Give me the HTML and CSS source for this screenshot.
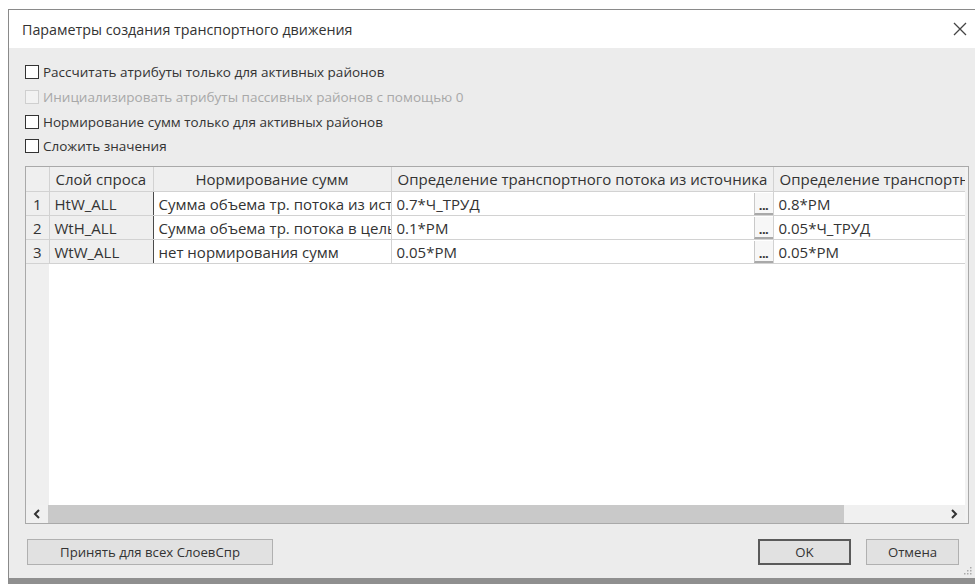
FILE: index.html
```html
<!DOCTYPE html>
<html lang="ru">
<head>
<meta charset="utf-8">
<title>Параметры создания транспортного движения</title>
<link rel="stylesheet" href="styles.css">
</head>
<body>
<div class="window">
  <div class="titlebar">
    <span class="title">Параметры создания транспортного движения</span>
    <svg class="close" width="14" height="14" viewBox="0 0 14 14"><path d="M1 1 L13 13 M13 1 L1 13" stroke="#444" stroke-width="1.3" fill="none"/></svg>
  </div>
  <div class="content">
    <div class="options">
      <label class="opt"><span class="box"></span>Рассчитать атрибуты только для активных районов</label>
      <label class="opt disabled"><span class="box"></span>Инициализировать атрибуты пассивных районов с помощью 0</label>
      <label class="opt"><span class="box"></span>Нормирование сумм только для активных районов</label>
      <label class="opt"><span class="box"></span>Сложить значения</label>
    </div>

    <div class="gridframe">
      <div class="gridview">
        <table class="grid">
          <colgroup>
            <col class="c-num"><col class="c-layer"><col class="c-norm"><col class="c-src"><col class="c-dst">
          </colgroup>
          <thead>
            <tr>
              <th class="corner"></th>
              <th>Слой спроса</th>
              <th class="center">Нормирование сумм</th>
              <th>Определение транспортного потока из источника</th>
              <th>Определение транспортного потока в цель</th>
            </tr>
          </thead>
          <tbody>
            <tr>
              <td class="num">1</td>
              <td class="fixed">HtW_ALL</td>
              <td>Сумма объема тр. потока из источника</td>
              <td><div class="edit"><span class="val">0.7*Ч_ТРУД</span><span class="dots">...</span></div></td>
              <td>0.8*PM</td>
            </tr>
            <tr>
              <td class="num">2</td>
              <td class="fixed">WtH_ALL</td>
              <td>Сумма объема тр. потока в цель</td>
              <td><div class="edit"><span class="val">0.1*PM</span><span class="dots">...</span></div></td>
              <td>0.05*Ч_ТРУД</td>
            </tr>
            <tr>
              <td class="num">3</td>
              <td class="fixed">WtW_ALL</td>
              <td>нет нормирования сумм</td>
              <td><div class="edit"><span class="val">0.05*PM</span><span class="dots">...</span></div></td>
              <td>0.05*PM</td>
            </tr>
          </tbody>
        </table>
        <div class="filler">
          <div class="filler-num"></div>
          <div class="filler-body"></div>
        </div>
      </div>
      <div class="hscroll">
        <span class="arrow">
          <svg width="8" height="10" viewBox="0 0 8 10"><path d="M6 1 L2 5 L6 9" stroke="#333" stroke-width="2" fill="none"/></svg>
        </span>
        <div class="track"><div class="thumb"></div></div>
        <span class="arrow">
          <svg width="8" height="10" viewBox="0 0 8 10"><path d="M2 1 L6 5 L2 9" stroke="#333" stroke-width="2" fill="none"/></svg>
        </span>
      </div>
    </div>

    <div class="buttons">
      <button class="btn wide">Принять для всех СлоевСпр</button>
      <div class="spacer"></div>
      <button class="btn default">OK</button>
      <button class="btn">Отмена</button>
    </div>
    <svg class="grip" width="8" height="8" viewBox="0 0 8 8">
      <rect x="6" y="0" width="1.5" height="1.5" fill="#aaa"/>
      <rect x="3" y="3" width="1.5" height="1.5" fill="#aaa"/>
      <rect x="6" y="3" width="1.5" height="1.5" fill="#aaa"/>
      <rect x="0" y="6" width="1.5" height="1.5" fill="#aaa"/>
      <rect x="3" y="6" width="1.5" height="1.5" fill="#aaa"/>
      <rect x="6" y="6" width="1.5" height="1.5" fill="#aaa"/>
    </svg>
  </div>
</div>
</body>
</html>
```

FILE: styles.css
```css
* { box-sizing: border-box; }

html, body {
  margin: 0;
  padding: 0;
  background: #ffffff;
  overflow: hidden;
  width: 975px;
  height: 584px;
}

body {
  font-family: "Open Sans", "Noto Sans", sans-serif;
  color: #3a3a3a;
}

.window {
  margin: 9px 0 0 8px;
  width: 980px;
  height: 575px;
  border: 1px solid #8a8a8a;
  border-bottom: 6px solid #8f8f8f;
  display: flex;
  flex-direction: column;
  background: #ececec;
}

.titlebar {
  height: 38px;
  background: #ffffff;
  display: flex;
  align-items: center;
  padding: 0 0 0 13px;
  flex: none;
}

.title {
  font-size: 14.3px;
  flex: 1;
  color: #333;
}

.close {
  margin-right: 20px;
}

.content {
  flex: 1;
  display: flex;
  flex-direction: column;
  padding: 12px 0 0 16px;
}

.options {
  display: flex;
  flex-direction: column;
}

.opt {
  height: 24.7px;
  display: flex;
  align-items: center;
  font-size: 13.5px;
  color: #333;
}

.opt .box {
  width: 14px;
  height: 14px;
  border: 1px solid #333;
  background: #fff;
  margin-right: 4px;
  flex: none;
}

.opt.disabled {
  color: #a8a8a8;
}

.opt.disabled .box {
  border-color: #cfcfcf;
  background: #f2f2f2;
}

/* grid */
.gridframe {
  margin-top: 7px;
  width: 944px;
  height: 358px;
  border: 1px solid #a9a9a9;
  background: #f2f2f2;
  display: flex;
  flex-direction: column;
  padding-right: 3px;
}

.gridview {
  flex: 1;
  overflow: hidden;
  display: flex;
  flex-direction: column;
  background: #fff;
}

.grid {
  border-collapse: collapse;
  table-layout: fixed;
  width: 967px;
  font-size: 15px;
  flex: none;
  color: #333;
}

.c-num { width: 23px; }
.c-layer { width: 104px; }
.c-norm { width: 238px; }
.c-src { width: 382px; }
.c-dst { width: 220px; }

.grid th, .grid td {
  height: 24px;
  padding: 0 0 0 5px;
  white-space: nowrap;
  overflow: hidden;
  text-overflow: clip;
  border: 1px solid #d2d2d2;
  text-align: left;
  font-weight: normal;
}

.grid thead th {
  height: 25px;
  background: #efefef;
  border-top: none;
  padding-left: 6px;
}

.grid th.center { text-align: center; padding-left: 0; }

.grid th.corner,
.grid td.num {
  background: #efefef;
  border-left: none;
}

.grid td.num {
  text-align: center;
  padding: 0;
}

.grid td.fixed {
  background: #efefef;
  border-right: 1px solid #4a4a4a;
}

.grid td:last-child, .grid th:last-child {
  border-right: none;
}

.edit {
  display: flex;
  align-items: stretch;
  height: 23px;
}

.val {
  flex: 1;
  display: flex;
  align-items: center;
}

.dots {
  width: 19px;
  border-left: 1px solid #c9c9c9;
  border-bottom: 2px solid #a9a9a9;
  background: #f7f7f7;
  font-size: 13px;
  line-height: 24px;
  text-align: center;
  color: #333;
  margin-top: 1px;
  font-weight: 700;
  letter-spacing: -0.5px;
  overflow: hidden;
}

.filler {
  flex: 1;
  display: flex;
}

.filler-num {
  width: 23px;
  background: #efefef;
}

.filler-body {
  flex: 1;
  background: #fff;
}

.hscroll {
  height: 18px;
  display: flex;
  align-items: stretch;
  background: #f0f0f0;
  flex: none;
}

.hscroll .arrow {
  width: 22px;
  display: flex;
  align-items: center;
  justify-content: center;
}

.track {
  flex: 1;
  display: flex;
}

.thumb {
  width: 796px;
  background: #c9c9c9;
}

/* buttons */
.buttons {
  margin-top: 15px;
  display: flex;
  align-items: center;
  padding-right: 28px;
}

.btn {
  height: 26px;
  font-family: inherit;
  font-size: 13.2px;
  color: #333;
  background: #e1e1e1;
  border: 1px solid #b0b0b0;
  padding: 0;
}

.btn.wide {
  width: 246px;
  margin-left: 2px;
}

.spacer { flex: 1; }

.btn.default {
  width: 93px;
  border: 2px solid #5a5a5a;
  margin-right: 15px;
}

.btn + .btn:not(.default) {
  width: 93px;
}

.grip {
  align-self: flex-end;
  margin: 2px 15px 0 0;
}
```
